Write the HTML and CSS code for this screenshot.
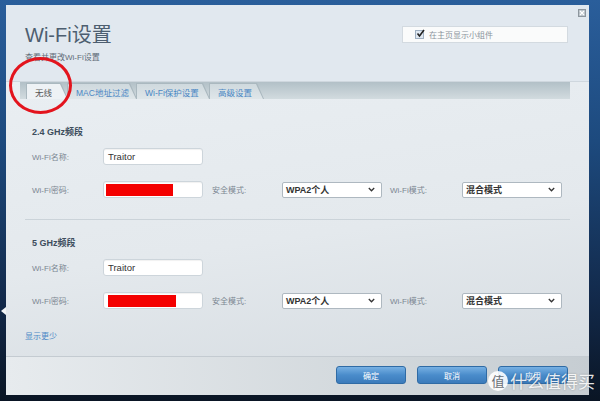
FILE: index.html
```html
<!DOCTYPE html>
<html lang="zh-CN">
<head>
    <meta charset="UTF-8">
    <title>Wi-Fi设置</title>
    <link rel="stylesheet" href="styles.css">
</head>
<body>
<div class="desk">
    <div class="dialog">
        <div class="close">
            <svg width="8" height="8" viewBox="0 0 8 8"><rect x="0.5" y="0.5" width="7" height="7" fill="#b9c1c8" stroke="#8d969e"/><path d="M2 2L6 6M6 2L2 6" stroke="#fff" stroke-width="1.2"/></svg>
        </div>
        <div class="head">
            <div>
                <h1>Wi-Fi设置</h1>
                <p class="sub">查看并更改Wi-Fi设置</p>
            </div>
            <div class="widget">
                <span class="cb"><svg width="9" height="9" viewBox="0 0 9 9"><path d="M1.5 4.5L3.5 7L8 1" fill="none" stroke="#222" stroke-width="1.6"/></svg></span>
                在主页显示小组件
            </div>
        </div>

        <div class="main">
            <div class="tabbar">
                <div class="tab active w1"><span>无线</span></div>
                <div class="tab w2"><span>MAC地址过滤</span></div>
                <div class="tab w3"><span>Wi-Fi保护设置</span></div>
                <div class="tab w4"><span>高级设置</span></div>
            </div>

            <div class="panel">
                <h2>2.4 GHz频段</h2>
                <div class="row">
                    <div class="lbl">Wi-Fi名称:</div>
                    <div class="field">Traitor</div>
                </div>
                <div class="row">
                    <div class="lbl">Wi-Fi密码:</div>
                    <div class="field"><span class="redact"></span></div>
                    <div class="lbl lbl2">安全模式:</div>
                    <div class="sel"><span>WPA2个人</span><svg width="7" height="5" viewBox="0 0 7 5"><path d="M0.8 1L3.5 3.8L6.2 1" fill="none" stroke="#333" stroke-width="1.3"/></svg></div>
                    <div class="lbl lbl3">Wi-Fi模式:</div>
                    <div class="sel"><span>混合模式</span><svg width="7" height="5" viewBox="0 0 7 5"><path d="M0.8 1L3.5 3.8L6.2 1" fill="none" stroke="#333" stroke-width="1.3"/></svg></div>
                </div>

                <div class="divider"></div>

                <h2 class="second">5 GHz频段</h2>
                <div class="row">
                    <div class="lbl">Wi-Fi名称:</div>
                    <div class="field">Traitor</div>
                </div>
                <div class="row">
                    <div class="lbl">Wi-Fi密码:</div>
                    <div class="field"><span class="redact wide"></span></div>
                    <div class="lbl lbl2">安全模式:</div>
                    <div class="sel"><span>WPA2个人</span><svg width="7" height="5" viewBox="0 0 7 5"><path d="M0.8 1L3.5 3.8L6.2 1" fill="none" stroke="#333" stroke-width="1.3"/></svg></div>
                    <div class="lbl lbl3">Wi-Fi模式:</div>
                    <div class="sel"><span>混合模式</span><svg width="7" height="5" viewBox="0 0 7 5"><path d="M0.8 1L3.5 3.8L6.2 1" fill="none" stroke="#333" stroke-width="1.3"/></svg></div>
                </div>

                <a class="less">显示更少</a>
            </div>
        </div>

        <div class="foot">
            <button>确定</button>
            <button>取消</button>
            <button>应用</button>
        </div>
    </div>

    <div class="ring"></div>
    <div class="edge-arrow"></div>
    <div class="watermark"><span class="logo">值</span>什么值得买</div>
</div>
</body>
</html>
```

FILE: styles.css
```css
* {
  box-sizing: border-box;
}
html, body {
  margin: 0;
  height: 100%;
}
body {
  font-family: "Liberation Sans", "Noto Sans CJK SC", sans-serif;
  background: linear-gradient(#2a5e9b, #1d4a7e 35%, #12294a 75%, #0a1524);
  overflow: hidden;
}
.desk {
  position: relative;
  width: 600px;
  height: 401px;
  padding: 5px 11px 6px 6px;
}
.dialog {
  position: relative;
  width: 583px;
  height: 390px;
  display: flex;
  flex-direction: column;
  background: #e8edf1;
}
.close {
  position: absolute;
  top: 4px;
  right: 3px;
  line-height: 0;
}

/* header */
.head {
  height: 77px;
  background: #e1e8ef;
  border-bottom: 1px solid #cfd7de;
  padding: 0 21px 0 19px;
  display: flex;
  justify-content: space-between;
}
h1 {
  margin: 19px 0 0;
  font-size: 20px;
  line-height: 22px;
  font-weight: normal;
  color: #4d5e70;
}
.sub {
  margin: 6px 0 0;
  font-size: 8px;
  line-height: 11px;
  color: #5f6b77;
}
.widget {
  margin-top: 21px;
  width: 166px;
  height: 17px;
  background: #fafbfb;
  border: 1px solid #d3dae0;
  display: flex;
  align-items: center;
  padding-left: 12px;
  font-size: 8px;
  color: #8a939b;
}
.cb {
  width: 9px;
  height: 9px;
  margin-right: 5px;
  background: #dfe8f2;
  border: 1px solid #9fb0c2;
  line-height: 0;
  position: relative;
}
.cb svg {
  position: absolute;
  left: 0;
  top: -2px;
}

/* tabs */
.main {
  flex: 1;
  background: linear-gradient(172deg, #e9eef2 0%, #e4e9ed 55%, #d7dde2 100%);
}
.tabbar {
  margin: 0 19px 0 14px;
  height: 17px;
  background: linear-gradient(#b2c0c7, #d2dbdf);
  display: flex;
  align-items: flex-end;
  padding-left: 6px;
}
.tab {
  height: 16px;
  padding: 1px 0 0 1px;
  background: #aab8bf;
  clip-path: polygon(0 0, calc(100% - 7px) 0, 100% 100%, 0 100%);
  margin-right: -1px;
}
.tab span {
  display: flex;
  align-items: center;
  height: 100%;
  padding-left: 8px;
  background: linear-gradient(#cfd9de, #dfe6e9);
  clip-path: polygon(0 0, calc(100% - 8px) 0, calc(100% - 1px) 100%, 0 100%);
  font-size: 8.5px;
  color: #4a87c4;
  white-space: nowrap;
}
.tab.active span {
  background: #eef2f5;
  color: #555;
}
.w1 { width: 42px; }
.w2 { width: 70px; }
.w3 { width: 74px; }
.w4 { width: 55px; }

/* form */
.panel {
  padding: 27px 26px 0;
}
h2 {
  margin: 0 0 10px;
  font-size: 9px;
  line-height: 12px;
  color: #3d4d5d;
}
h2.second {
  margin-top: 17px;
}
.row {
  display: flex;
  align-items: center;
  height: 17px;
  margin-bottom: 16px;
}
.lbl {
  width: 71px;
  font-size: 8px;
  color: #7b8691;
}
.lbl2 {
  width: 70px;
  margin-left: 9px;
}
.lbl3 {
  width: 72px;
  margin-left: 8px;
}
.field {
  width: 100px;
  height: 17px;
  background: #fff;
  border: 1px solid #cdd5db;
  border-radius: 3px;
  box-shadow: inset 0 1px 1px rgba(0, 0, 0, 0.06);
  padding: 0 4px;
  display: flex;
  align-items: center;
  font-size: 9.5px;
  color: #333;
}
.redact {
  width: 67px;
  height: 12px;
  margin-left: -2px;
  background: #f40000;
}
.redact.wide {
  width: 68px;
  margin-left: 0;
}
.sel {
  width: 100px;
  height: 16px;
  background: #fff;
  border: 1px solid #aeb8c0;
  border-radius: 2px;
  padding: 0 6px 0 3px;
  display: flex;
  align-items: center;
  justify-content: space-between;
  font-size: 9px;
  font-weight: bold;
  color: #333;
}
.divider {
  height: 1px;
  background: #cbd3d9;
  margin: 21px -7px 0;
}
.less {
  display: block;
  margin: 22px 0 0 -7px;
  font-size: 8px;
  line-height: 12px;
  color: #4b88c6;
}

/* footer */
.foot {
  height: 39px;
  border-top: 1px solid #c4cbd1;
  background: linear-gradient(90deg, #e7ebee, #d3d9dd 60%, #c6cdd2);
  display: flex;
  justify-content: flex-end;
  gap: 11px;
  padding: 9px 21px 0 0;
}
button {
  width: 70px;
  height: 18px;
  border: 1px solid #2f6ba5;
  border-radius: 3px;
  background: linear-gradient(#77b0e3, #4a8ccb 50%, #3b7bbb);
  color: #fff;
  font-family: inherit;
  font-size: 8px;
  padding: 0;
}

/* overlays */
.ring {
  position: absolute;
  left: 9px;
  top: 57px;
  width: 63px;
  height: 57px;
  border: 3px solid #e3141d;
  border-radius: 50%;
}
.edge-arrow {
  position: absolute;
  left: 1px;
  top: 307px;
  width: 0;
  height: 0;
  border-top: 4px solid transparent;
  border-bottom: 4px solid transparent;
  border-right: 5px solid #f2f4f6;
}
.watermark {
  position: absolute;
  right: 5px;
  bottom: 8px;
  display: flex;
  align-items: center;
  font-size: 17px;
  color: rgba(255, 255, 255, 0.88);
  text-shadow: 0 0 2px rgba(0, 0, 0, 0.3);
}
.logo {
  width: 20px;
  height: 20px;
  margin-right: 2px;
  border-radius: 50%;
  background: rgba(255, 255, 255, 0.9);
  color: #6a6f75;
  font-size: 13px;
  display: flex;
  align-items: center;
  justify-content: center;
  text-shadow: none;
}
```
